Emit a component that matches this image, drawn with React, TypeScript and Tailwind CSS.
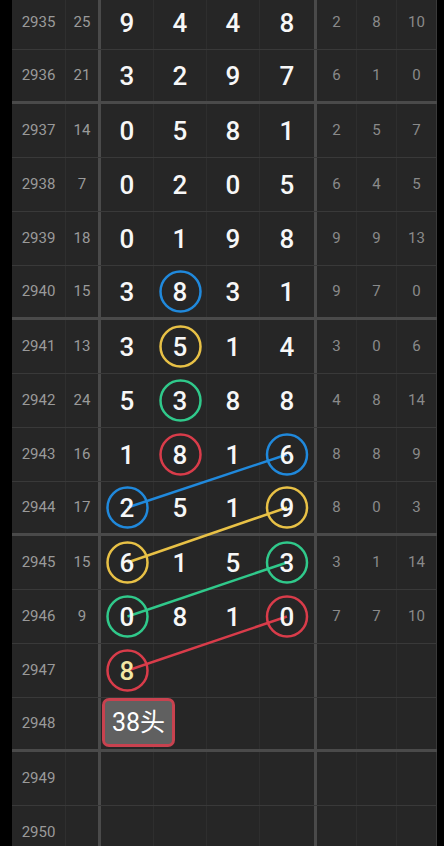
import React from "react";

type Row = {
  no: number;
  sum?: number;
  d: (number | null)[];
  r: (number | null)[];
};

const rows: Row[] = [
  { no: 2935, sum: 25, d: [9, 4, 4, 8], r: [2, 8, 10] },
  { no: 2936, sum: 21, d: [3, 2, 9, 7], r: [6, 1, 0] },
  { no: 2937, sum: 14, d: [0, 5, 8, 1], r: [2, 5, 7] },
  { no: 2938, sum: 7, d: [0, 2, 0, 5], r: [6, 4, 5] },
  { no: 2939, sum: 18, d: [0, 1, 9, 8], r: [9, 9, 13] },
  { no: 2940, sum: 15, d: [3, 8, 3, 1], r: [9, 7, 0] },
  { no: 2941, sum: 13, d: [3, 5, 1, 4], r: [3, 0, 6] },
  { no: 2942, sum: 24, d: [5, 3, 8, 8], r: [4, 8, 14] },
  { no: 2943, sum: 16, d: [1, 8, 1, 6], r: [8, 8, 9] },
  { no: 2944, sum: 17, d: [2, 5, 1, 9], r: [8, 0, 3] },
  { no: 2945, sum: 15, d: [6, 1, 5, 3], r: [3, 1, 14] },
  { no: 2946, sum: 9, d: [0, 8, 1, 0], r: [7, 7, 10] },
  { no: 2947, d: [8, null, null, null], r: [null, null, null] },
  { no: 2948, d: [null, null, null, null], r: [null, null, null] },
  { no: 2949, d: [null, null, null, null], r: [null, null, null] },
  { no: 2950, d: [null, null, null, null], r: [null, null, null] },
];

const BLUE = "#2089dc";
const YELLOW = "#e8c146";
const GREEN = "#30c98b";
const RED = "#d93c4a";

// [row index, digit column, colour]
const circles: [number, number, string][] = [
  [5, 1, BLUE],
  [6, 1, YELLOW],
  [7, 1, GREEN],
  [8, 1, RED],
  [8, 3, BLUE],
  [9, 0, BLUE],
  [9, 3, YELLOW],
  [10, 0, YELLOW],
  [10, 3, GREEN],
  [11, 0, GREEN],
  [11, 3, RED],
  [12, 0, RED],
];

const links: [number, number, number, number, string][] = [
  [8, 3, 9, 0, BLUE],
  [9, 3, 10, 0, YELLOW],
  [10, 3, 11, 0, GREEN],
  [11, 3, 12, 0, RED],
];

const digitW = [53, 53, 53, 54];

function isGroupEnd(no: number) {
  return (no - 2936) % 4 === 0;
}

function cx(c: number) {
  let x = 54 + 32 + 3;
  for (let i = 0; i < c; i++) x += digitW[i];
  return x + digitW[c] / 2;
}

function cy(i: number) {
  const end = isGroupEnd(rows[i].no);
  return i * 54 + (end ? 25.5 : 26.5);
}

export default function App() {
  return (
    <div
      className="w-[444px] h-[846px] overflow-hidden bg-black pl-[12px]"
      style={{ fontFamily: "Roboto, 'Noto Sans', sans-serif" }}
    >
      <div className="relative w-[425px] -mt-[4px]">
        {rows.map((row, i) => {
          const end = isGroupEnd(row.no);
          return (
            <div
              key={row.no}
              className={
                end
                  ? "flex h-[54px] bg-[#262626] border-b-[3px] border-[#4a4a4a]"
                  : "flex h-[54px] bg-[#262626] border-b border-[#393939]"
              }
            >
              <div className="w-[54px] flex items-center justify-center text-[15px] text-[#9a9a9a] border-r border-[#2f2f2f]">
                {row.no}
              </div>
              <div className="w-[32px] flex items-center justify-center text-[15px] text-[#9a9a9a]">
                {row.sum ?? ""}
              </div>
              <div className="w-[3px] bg-[#4a4a4a]" />
              {row.d.map((v, c) => (
                <div
                  key={c}
                  className={
                    c < 3
                      ? "flex items-center justify-center border-r border-[#2e2e2e]"
                      : "flex items-center justify-center"
                  }
                  style={{ width: digitW[c] }}
                >
                  {v !== null && (
                    <span
                      className={
                        row.no === 2947
                          ? "relative z-20 text-[26px] font-medium text-[#f3e7a4] leading-none"
                          : "relative z-20 text-[26px] font-medium text-[#f7f7f7] leading-none"
                      }
                    >
                      {v}
                    </span>
                  )}
                </div>
              ))}
              <div className="w-[3px] bg-[#4a4a4a]" />
              {row.r.map((v, c) => (
                <div
                  key={c}
                  className={
                    c < 2
                      ? "w-[40px] flex items-center justify-center text-[15px] text-[#8a8a8a] border-r border-[#2e2e2e]"
                      : "w-[40px] flex items-center justify-center text-[15px] text-[#8a8a8a] border-r border-[#3a3a3a]"
                  }
                >
                  {v ?? ""}
                </div>
              ))}
            </div>
          );
        })}

        <svg
          className="absolute left-0 top-0 z-10 pointer-events-none"
          width={425}
          height={864}
        >
          {links.map(([r1, c1, r2, c2, col], k) => (
            <line
              key={k}
              x1={cx(c1)}
              y1={cy(r1)}
              x2={cx(c2)}
              y2={cy(r2)}
              stroke={col}
              strokeWidth={2.5}
            />
          ))}
          {circles.map(([r, c, col], k) => (
            <circle
              key={k}
              cx={cx(c)}
              cy={cy(r)}
              r={20}
              fill="none"
              stroke={col}
              strokeWidth={2.5}
            />
          ))}
        </svg>

        <div
          className="absolute z-20 left-[90px] top-[702px] w-[73px] h-[49px] rounded-[7px] border-[3px] border-[#c8424f] bg-[#606060] flex items-center justify-center text-white text-[25px]"
          style={{ fontFamily: "Roboto, 'Noto Sans CJK SC', sans-serif" }}
        >
          38头
        </div>
      </div>
    </div>
  );
}
